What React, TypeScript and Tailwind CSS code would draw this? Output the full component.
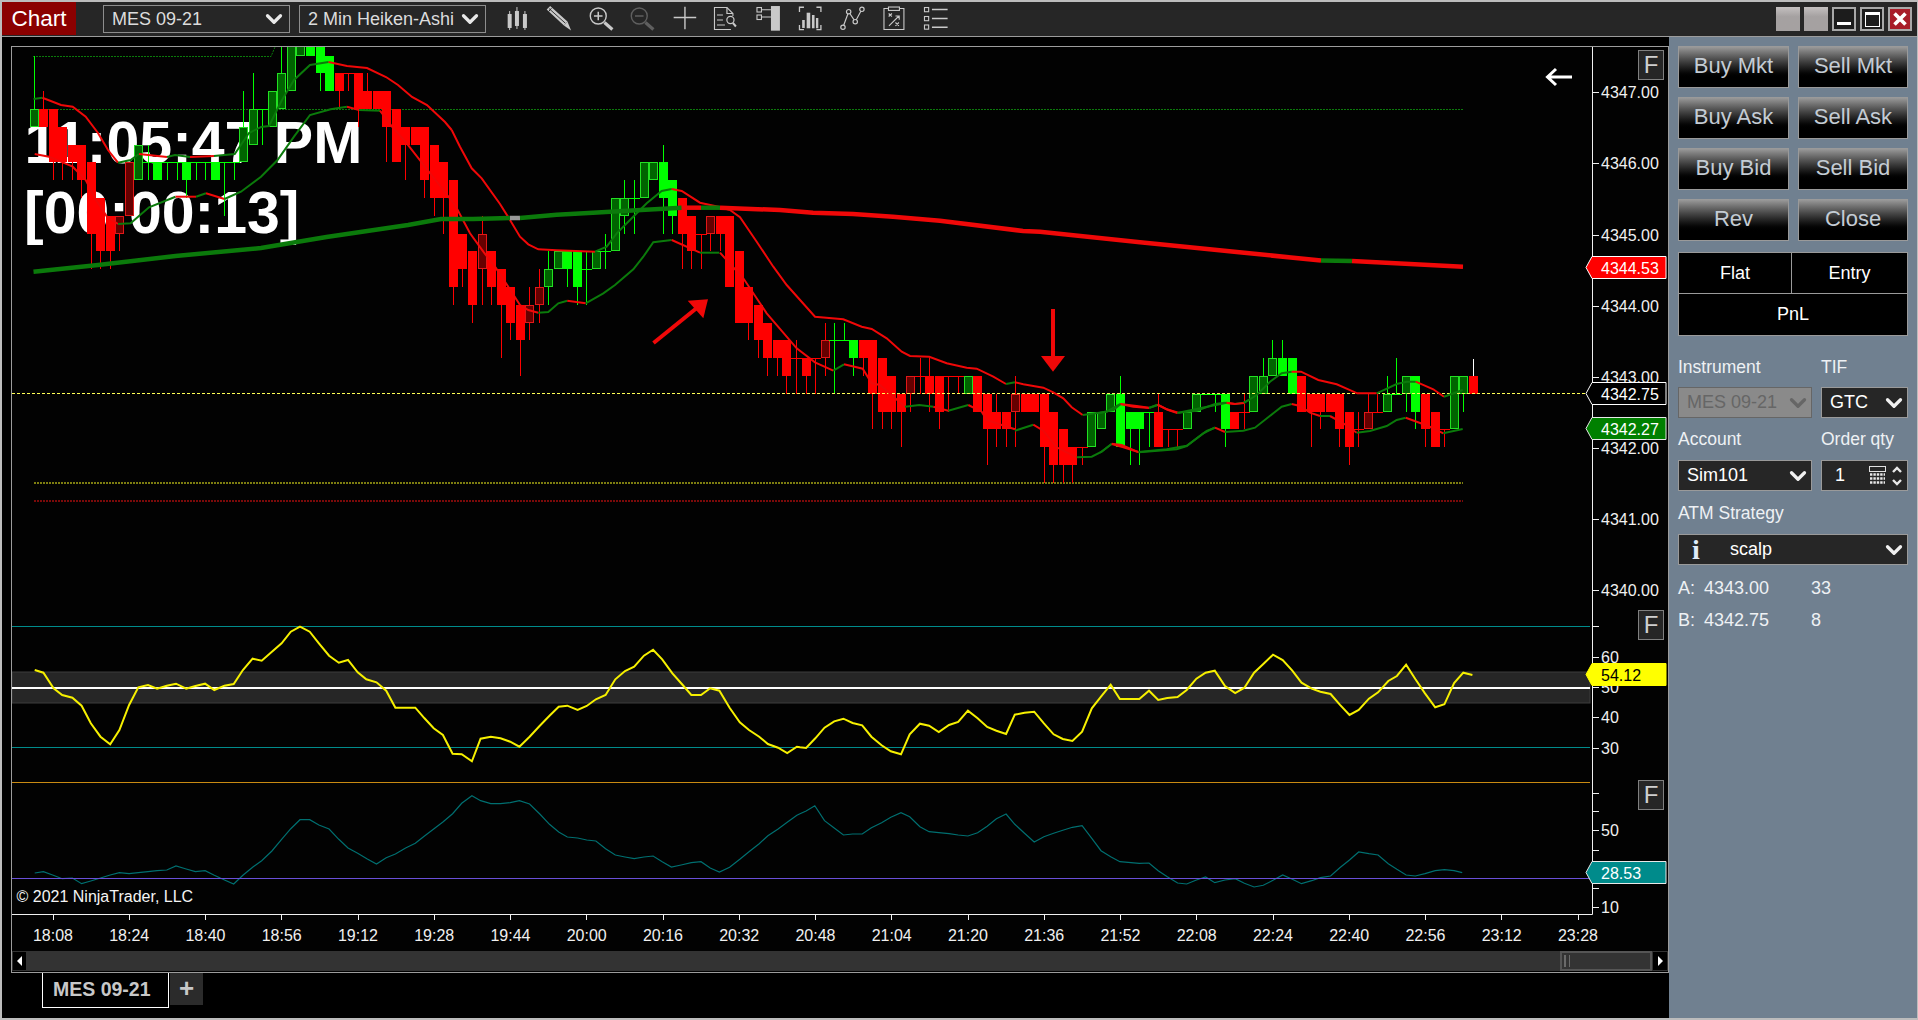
import { ChevronDown } from "lucide-react";

type Candle = [string, number, number, number?, number?];

// [type, body top, body bottom, wick high, wick low] in quarter point levels, 0 = 4346.00
const candles: Candle[] = [
  ["g", -3, -2, -6], ["R", -3, -2, -4], ["R", -3, 0, -3, 1], ["R", -2, 0, -2, 1], ["R", -1, 0, -1, 1], ["R", -1, 1, -1, 2],
  ["R", 0, 4, 0, 6], ["R", 2, 5, 2, 6], ["R", 3, 5, 3, 6], ["r", 3, 4, 3, 5], ["r", 0, 3], ["g", -1, 1],
  ["e", 0, 0, -1, 1], ["G", 0, 1], ["e", 0, 0, 0, 1], ["e", 0, 0, 0, 1], ["G", 0, 1, 0, 2], ["e", 0, 0, 0, 1],
  ["e", 0, 0, 0, 1], ["G", 0, 1], ["e", 0, 0, 0, 3], ["e", 0, 0, 0, 1], ["g", -2, 0, -4], ["g", -3, -1, -5],
  ["e", -3, -3, -3, -1], ["g", -4, -2], ["g", -5, -3, -7], ["g", -7, -4], ["g", -7, -6], ["G", -7, -6], ["G", -7, -5, -7, -4],
  ["G", -6, -4], ["R", -5, -4, -5, -3], ["d", -5, -5, -5, -4], ["R", -5, -3, -5, -2], ["R", -4, -3, -5], ["R", -4, -3],
  ["R", -4, -2, -4, 0], ["R", -3, 0], ["R", -2, -1, -2, 1], ["R", -2, -1], ["R", -2, 1, -2, 2], ["R", -1, 2, -1, 3],
  ["R", 0, 2, 0, 4], ["R", 1, 7, 1, 8], ["R", 4, 6, 4, 7], ["R", 5, 8, 5, 9], ["r", 4, 6, 3, 8], ["R", 5, 7, 5, 8],
  ["R", 6, 8, 6, 11], ["R", 7, 9, 7, 10], ["R", 8, 10, 8, 12], ["r", 8, 9, 7, 10], ["r", 7, 8, 6, 9], ["g", 6, 7, 5, 8],
  ["g", 5, 6], ["G", 5, 6, 5, 7], ["G", 5, 7, 5, 8], ["e", 6, 6, 5, 8], ["g", 5, 6], ["e", 5, 5, 4, 6], ["g", 2, 5],
  ["g", 2, 3, 1, 4], ["e", 2, 2, 1, 4], ["g", 0, 2], ["g", 0, 1], ["G", 0, 2, -1, 4], ["G", 1, 3, 1, 4], ["R", 2, 4, 2, 6],
  ["R", 3, 5, 3, 6], ["d", 4, 4, 4, 6], ["r", 3, 4, 3, 5], ["R", 3, 4, 3, 5], ["R", 3, 7], ["R", 5, 9], ["R", 7, 9, 7, 10],
  ["R", 8, 10, 8, 11], ["R", 9, 11, 9, 12], ["R", 10, 11, 10, 12], ["R", 10, 12, 10, 13], ["d", 11, 11, 10, 13],
  ["R", 11, 12, 11, 13], ["d", 11, 11, 11, 13], ["r", 10, 11, 9, 12], ["e", 10, 10, 9, 13], ["e", 10, 10, 9, 10],
  ["G", 10, 11, 10, 12], ["R", 10, 11, 10, 12], ["R", 10, 13, 10, 15], ["R", 11, 14, 11, 15], ["R", 12, 14, 12, 15],
  ["R", 13, 14, 13, 16], ["r", 12, 13, 12, 14], ["d", 12, 12, 11, 13], ["R", 12, 13, 11, 14], ["R", 12, 14, 12, 15],
  ["d", 12, 12, 12, 14], ["d", 12, 12, 12, 13], ["g", 12, 13], ["R", 12, 14], ["R", 13, 15, 13, 17], ["R", 14, 15, 13, 16],
  ["R", 14, 15, 14, 16], ["r", 13, 14, 12, 16], ["R", 13, 14], ["R", 13, 14], ["R", 13, 16, 13, 18], ["R", 14, 17, 14, 18],
  ["R", 15, 17, 15, 18], ["R", 16, 17, 16, 18], ["d", 16, 16, 16, 17], ["g", 14, 16], ["g", 14, 15], ["g", 13, 14],
  ["G", 13, 16, 12, 16], ["G", 14, 15, 14, 17], ["G", 14, 15, 14, 17], ["e", 14, 14, 14, 16], ["R", 14, 16, 13, 16],
  ["d", 15, 15, 15, 16], ["d", 15, 15, 15, 16], ["g", 14, 15], ["g", 13, 14], ["e", 13, 13, 13, 13], ["e", 13, 13, 13, 14],
  ["G", 13, 15, 13, 16], ["R", 14, 15], ["d", 14, 14, 13, 15], ["g", 12, 14], ["g", 12, 13, 11, 13], ["g", 11, 12, 10, 12],
  ["G", 11, 12, 10, 12], ["G", 11, 13], ["R", 12, 14], ["R", 13, 14, 13, 16], ["R", 13, 14, 13, 15], ["R", 13, 14],
  ["R", 13, 15, 13, 16], ["R", 14, 16, 14, 17], ["d", 15, 15, 14, 16], ["r", 14, 15, 13, 15], ["d", 14, 14, 13, 14],
  ["g", 13, 14, 12, 14], ["e", 13, 13, 11, 13], ["g", 12, 13, 12, 14], ["G", 12, 14, 12, 15], ["R", 13, 15, 13, 16],
  ["R", 14, 16], ["d", 15, 15, 15, 16], ["g", 12, 15], ["g", 12, 13, 12, 14], ["R", 12, 13],
];

const levelY = (k: number) => Math.round(162.4 + 17.8 * k);
const candleX = (i: number) => Math.round(33.6 + 9.53 * i);

// picks points off a 3x crop: offset + value / 3
const crop = (ox: number, oy: number, p: number[]) => p.map((v, i) => (i % 2 === 0 ? ox + v / 3 : oy + v / 3));
const toPts = (p: number[]) => p.map((v) => v.toFixed(1)).join(" ");
const R = "#f00808";
const D = "#0b7a0b";

const maLines: [string, number[]][] = [
  [D, [33.5, 99, 42.4, 97.7]],
  [R, [42.4, 97.7, 61, 105, 72.7, 106.7, 85.7, 116.7, 98, 133, 108, 150, 118, 162.7]],
  [D, [118, 162.7, 130.6, 160, 139, 154]],
  [R, [139, 154, 167, 157]],
  [D, [167, 157, 175, 155, 190, 157]],
  [R, [190, 157, 214, 156]],
  [D, [214, 156, 234.7, 154, 249, 133, 261, 127, 269, 126, 282, 100, 294, 80, 310, 65, 328.6, 62]],
  [R, [328.6, 62, 347, 66, 367, 68, 386, 77, 398, 85, 412, 97, 427, 105, 445, 122, 451.7, 130]],
  [R, crop(440, 130, [35, 0, 60, 50, 95, 115, 125, 145, 180, 222, 210, 270, 240, 320, 265, 343, 295, 358, 350, 361, 465, 365])],
  [D, crop(440, 130, [465, 365, 500, 350, 530, 310, 570, 270, 620, 220, 665, 183, 695, 177])],
  [R, crop(440, 130, [695, 177, 725, 183, 780, 218, 835, 230, 870, 240])],
  [R, crop(640, 130, [270, 240, 300, 262, 350, 335, 400, 410, 440, 465, 525, 560, 610, 568, 665, 590, 695, 597, 740, 625, 785, 665, 810, 678, 868, 680, 920, 700, 980, 713, 1010, 716, 1060, 740, 1098, 762])],
  [D, crop(640, 130, [1098, 762, 1125, 757])],
  [R, crop(640, 130, [1125, 757, 1150, 763, 1210, 773, 1240, 787, 1270, 805, 1295, 832, 1328, 855])],
  [D, crop(640, 130, [1328, 855, 1400, 845, 1440, 822])],
  [R, crop(850, 340, [810, 192, 860, 198, 897, 203])],
  [D, crop(850, 340, [897, 203, 925, 195])],
  [R, crop(850, 340, [925, 195, 950, 208, 985, 218])],
  [D, crop(850, 340, [985, 218, 1040, 212, 1095, 192, 1125, 188])],
  [R, crop(850, 340, [1125, 188, 1155, 192])],
  [D, crop(850, 340, [1155, 192, 1180, 188, 1200, 178])],
  [D, crop(1100, 330, [0, 248, 40, 240, 62, 222])],
  [R, crop(1100, 330, [62, 222, 100, 230, 147, 234])],
  [D, crop(1100, 330, [147, 234, 172, 224])],
  [R, crop(1100, 330, [172, 224, 205, 240, 232, 249])],
  [D, crop(1100, 330, [232, 249, 300, 235, 380, 218])],
  [R, crop(1100, 330, [380, 218, 405, 222, 432, 219])],
  [D, crop(1100, 330, [432, 219, 470, 195, 510, 155, 545, 130, 575, 125])],
  [R, crop(1100, 330, [575, 125, 603, 125, 655, 150, 710, 163, 772, 190, 830, 190])],
  [D, crop(1100, 330, [830, 190, 890, 162, 920, 155, 947, 155])],
  [R, crop(1100, 330, [947, 155, 1000, 178, 1032, 200])],
  [D, crop(1100, 330, [1032, 200, 1088, 180])],
  // lower band
  [R, [34.7, 154, 49, 156.7, 72.7, 166.7, 85.7, 180, 96, 200, 107, 216.7, 118, 224]],
  [D, [118, 224, 130.6, 223.3, 149, 207.3, 175.5, 196.7]],
  [R, [175.5, 196.7, 196, 196.7]],
  [D, [196, 196.7, 206, 193.3]],
  [R, [206, 193.3, 224.5, 199]],
  [D, [224.5, 199, 241, 191.7, 261, 176.7, 277.5, 160, 294, 136.7, 310, 115, 330.6, 109.3, 347, 106.7]],
  [R, [347, 106.7, 359, 110]],
  [D, [359, 110, 380, 110.7]],
  [R, [380, 110.7, 392, 126.7, 404, 140, 455, 205]],
  [R, crop(440, 130, [45, 225, 90, 310, 130, 365, 165, 410, 195, 455, 240, 525, 265, 540, 295, 548])],
  [D, crop(440, 130, [295, 548, 325, 546, 355, 520, 382, 512])],
  [R, crop(440, 130, [382, 512, 437, 520])],
  [D, crop(440, 130, [437, 520, 490, 490, 525, 465, 580, 418, 610, 380, 640, 337, 695, 330])],
  [R, crop(440, 130, [695, 330, 780, 368])],
  [D, crop(440, 130, [780, 368, 838, 368])],
  [R, crop(640, 130, [240, 368, 310, 445, 360, 520, 380, 550, 470, 655, 525, 697, 580, 722])],
  [D, crop(640, 130, [580, 722, 612, 703])],
  [R, crop(640, 130, [612, 703, 668, 716, 695, 760, 720, 765, 795, 830])],
  [D, crop(640, 130, [795, 830, 838, 825, 880, 830])],
  [R, crop(640, 130, [880, 830, 925, 842])],
  [D, crop(640, 130, [925, 842, 985, 825])],
  [R, crop(640, 130, [985, 825, 1025, 845, 1040, 870, 1085, 885, 1125, 898])],
  [D, crop(850, 340, [495, 272, 550, 254])],
  [R, crop(850, 340, [550, 254, 580, 272, 620, 322, 680, 352])],
  [D, crop(850, 340, [680, 352, 725, 350, 755, 335, 785, 311])],
  [R, crop(850, 340, [785, 311, 815, 315, 867, 337])],
  [D, crop(850, 340, [867, 337, 980, 328, 1010, 318, 1060, 280, 1095, 262])],
  [D, crop(1100, 330, [0, 368, 35, 342])],
  [R, crop(1100, 330, [35, 342, 70, 352, 115, 366])],
  [D, crop(1100, 330, [115, 366, 200, 358, 260, 347, 320, 303, 345, 293])],
  [R, crop(1100, 330, [345, 293, 375, 306])],
  [D, crop(1100, 330, [375, 306, 430, 302, 465, 293, 520, 250, 545, 230, 575, 222])],
  [R, crop(1100, 330, [575, 222, 600, 228, 630, 248, 660, 258])],
  [D, crop(1100, 330, [660, 258, 690, 258])],
  [R, crop(1100, 330, [690, 258, 730, 280, 770, 308])],
  [D, crop(1100, 330, [770, 308, 810, 303, 860, 288, 890, 270, 917, 263])],
  [R, crop(1100, 330, [917, 263, 985, 288, 1030, 310])],
  [D, crop(1100, 330, [1030, 310, 1088, 297])],
];

const slowMa: [string, number[]][] = [
  [D, [33.5, 271.7, 98, 265, 175.5, 256, 261, 248, 326.5, 237, 408, 225, 441, 219, 473, 219, 510, 218]],
  ["#999999", [510, 218, 520, 218]],
  [D, [520, 218, 556.7, 214.7, 593, 212.7, 623, 211, 681.7, 207.7]],
  [R, [681.7, 207.7, 701, 207.7]],
  [D, [701, 207.7, 720, 207.7]],
  [R, [720, 207.7, 780, 210, 813, 212.7, 853, 214, 893, 216.7, 940, 220.7, 1023, 231, 1040, 231.7, 1140, 242.3, 1321, 260.5]],
  [D, [1321, 260.5, 1352, 261]],
  [R, [1352, 261, 1463, 266.7]],
];

// oscillators, read off 800px wide crops squeezed to 1568
const squeezed = (ox: number, p: number[]) => p.map((v, i) => (i % 2 === 0 ? ox + v / 1.96 : 610 + v / 3));

const yellowOsc = [
  ...squeezed(0, [68,180,85,188,105,235,122,255,142,263,160,287,178,340,197,380,216,403,234,360,253,285,271,232,290,225,308,236,327,227,345,221,365,236,383,228,402,221,420,240,440,227,458,222,476,180,495,146,513,152,533,125,552,100,570,65,588,50,607,65,625,100,645,137,664,158,682,150,701,187,718,208,738,217,757,242,775,293,814,293,832,325,850,355,868,375,887,431,905,433,925,454,942,386,962,380,981,385,1000,395,1018,410,1038,380,1058,347,1077,317,1095,290,1112,287,1132,300,1150,288,1168,268,1187,255,1206,208,1225,183,1243,170,1262,137,1280,119,1298,148,1318,190,1338,225,1355,255,1374,255,1392,235,1410,242,1430,293,1450,337,1468,360,1488,380,1505,402,1525,413,1543,429,1562,410]),
  ...squeezed(800, [0,412,12,414,30,385,48,353,67,334,85,326,103,339,122,346,140,380,160,406,178,424,198,433,215,373,235,341,253,347,272,366,292,345,310,336,329,302,348,325,367,351,385,362,404,372,421,314,440,308,459,305,478,340,497,373,515,387,534,393,553,365,572,295,590,260,609,224,627,267,665,267,684,242,702,270,720,264,740,261,758,240,777,206,795,188,813,182,833,228,853,249,871,233,890,188,908,162,927,134,946,150,965,182,983,218,1003,236,1020,245,1040,252,1058,284,1077,315,1095,300,1115,266,1133,247,1153,213,1170,198,1188,164,1206,207,1225,250,1245,292,1263,283,1282,219,1300,188,1318,195]),
];

const tealOsc = [
  ...squeezed(0, [68,789,85,785,103,795,122,806,142,804,160,821,178,813,197,804,216,795,234,788,253,791,271,788,290,785,308,782,327,780,345,768,365,777,383,785,402,782,420,796,440,810,458,822,476,796,495,772,513,752,533,723,552,688,570,656,588,629,607,629,625,645,645,657,664,688,682,714,701,730,720,747,738,762,757,743,775,732,795,714,814,700,832,678,850,657,868,636,887,611,905,580,925,557,942,572,962,581,981,581,1000,578,1018,572,1038,582,1058,612,1077,643,1095,666,1112,681,1132,684,1150,690,1168,693,1187,716,1206,735,1225,741,1243,746,1262,741,1280,738,1298,755,1316,771,1335,765,1355,758,1374,755,1392,774,1410,786,1430,772,1450,748,1468,725,1488,701,1505,677,1525,657,1543,637,1562,616]),
  ...squeezed(800, [0,611,12,603,29,587,48,632,67,654,85,675,103,672,122,672,140,653,160,638,178,622,198,608,215,620,235,650,253,665,272,668,292,671,310,675,329,678,348,668,367,649,385,626,404,612,421,643,440,670,459,696,478,680,497,670,515,661,534,652,553,647,572,685,590,722,609,740,627,755,665,760,684,759,702,782,720,800,740,819,758,822,777,810,795,801,813,818,833,810,853,806,871,820,890,831,908,826,927,811,946,795,965,808,983,821,1003,812,1020,803,1040,798,1058,773,1077,750,1095,726,1115,731,1133,735,1153,761,1170,778,1188,795,1206,798,1225,791,1245,782,1263,779,1282,782,1298,788]),
];

const priceLabels: [string, number][] = [
  ["4347.00", 92], ["4346.00", 163], ["4345.00", 235], ["4344.00", 306], ["4343.00", 377], ["4342.00", 448], ["4341.00", 519], ["4340.00", 590],
  ["60", 657], ["50", 687], ["40", 717], ["30", 748], ["50", 830], ["10", 907],
];
const plainTicks = [626, 793, 811, 850, 869, 888];

const timeLabels = ["18:08","18:24","18:40","18:56","19:12","19:28","19:44","20:00","20:16","20:32","20:48","21:04","21:20","21:36","21:52","22:08","22:24","22:40","22:56","23:12","23:28"];

const tags: [string, number, number, string, string, string][] = [
  ["4344.53", 256, 279, "#ff0000", "#ffffff", "#ffffff"],
  ["4342.75", 382, 405, "#000000", "#ffffff", "#ffffff"],
  ["4342.27", 417, 440, "#008000", "#ffffff", "#e8e8e8"],
  ["54.12", 663, 686, "#ffff00", "#000000", "#ffff00"],
  ["28.53", 861, 884, "#008b8b", "#ffffff", "#e8e8e8"],
];

function CandleMark({ c, i }: { c: Candle; i: number }) {
  const [t, top, bot, hi, lo] = c;
  const x = candleX(i);
  const isRed = t === "R" || t === "r" || t === "d";
  const color = isRed ? "#ff0000" : "#00ff00";
  const y1 = levelY(hi ?? top);
  const y2 = levelY(lo ?? bot);
  const by = levelY(top);
  const bh = levelY(bot) - by;
  return (
    <g>
      <rect x={x} y={y1} width={1} height={Math.max(y2 - y1, 1)} fill={color} />
      {(t === "R" || t === "G") && <rect x={x - 4} y={by} width={9} height={bh} fill={color} />}
      {(t === "g" || t === "r") && (
        <rect x={x - 3.5} y={by + 0.5} width={8} height={bh - 1} fill={t === "g" ? "#006400" : "#660000"} stroke={t === "g" ? "#22e022" : "#e01818"} />
      )}
      {(t === "d" || t === "e") && <rect x={x - 5} y={by} width={11} height={1} fill={color} />}
    </g>
  );
}

function ChartArea() {
  return (
    <svg viewBox="12 47 1656 904" className="block w-[1656px] h-[904px] bg-[#020202]">
      <text x="24.5" y="163" fontSize="59" fontWeight="700" fill="#fff">11:05:47 PM</text>
      <text x="24" y="233" fontSize="59" fontWeight="700" fill="#fff">[00:00:13]</text>

      {/* dotted levels */}
      <path d="M33 56.5H271L275 47" fill="none" stroke="#0b7a0b" strokeDasharray="2 1" />
      <path d="M33 109.5H1463" stroke="#0b7a0b" strokeDasharray="2 1" />
      <path d="M34 483H1463" stroke="#7d7d10" strokeWidth="2" strokeDasharray="2 1" />
      <path d="M34 501H1463" stroke="#7a0a0a" strokeWidth="2" strokeDasharray="2 1" />

      <g shapeRendering="crispEdges">
        {candles.map((c, i) => (
          <CandleMark key={i} c={c} i={i} />
        ))}
        <rect x={candleX(151)} y={359} width={1} height={17} fill="#fff" />
      </g>

      <path d="M12 393.5H1586" stroke="#ffff55" strokeDasharray="3 2" />

      {maLines.map(([color, p], i) => (
        <polyline key={i} points={toPts(p)} fill="none" stroke={color} strokeWidth="2" />
      ))}
      {slowMa.map(([color, p], i) => (
        <polyline key={i} points={toPts(p)} fill="none" stroke={color} strokeWidth="4.5" />
      ))}

      {/* drawn arrows */}
      <path d="M653.5 343L698 307" stroke="#f00808" strokeWidth="4" />
      <polygon points="687.7,300.7 708,299.3 703.3,318.3" fill="#f00808" />
      <path d="M1053 309V358" stroke="#f00808" strokeWidth="4" />
      <polygon points="1041,356 1065,356 1053,371.7" fill="#f00808" />
      <path d="M1549 77H1572M1556 69L1547.5 77L1556 85" fill="none" stroke="#fff" strokeWidth="3" />

      {/* indicator panels */}
      <rect x="12" y="672" width="1578" height="31" fill="#262626" stroke="#3c3c3c" />
      <path d="M12 626.5H1590M12 747.5H1590" stroke="#008b8b" />
      <path d="M12 688H1590" stroke="#fff" strokeWidth="2" />
      <path d="M12 782.5H1590" stroke="#c98a12" />
      <polyline points={toPts(tealOsc)} fill="none" stroke="#006f70" strokeWidth="1.2" />
      <path d="M12 878.5H1590" stroke="#6a4fd8" />
      <polyline points={toPts(yellowOsc)} fill="none" stroke="#f6f000" strokeWidth="2" />

      <text x="16.5" y="902" fontSize="16" fill="#f4f4f4">© 2021 NinjaTrader, LLC</text>

      {/* axes */}
      <path d="M1592.5 47V914.5H12" fill="none" stroke="#f0f0f0" />
      <g shapeRendering="crispEdges">
        {priceLabels.map(([, y], i) => (
          <rect key={i} x="1593" y={y} width="6" height="1" fill="#f0f0f0" />
        ))}
        {plainTicks.map((y) => (
          <rect key={y} x="1593" y={y} width="6" height="1" fill="#f0f0f0" />
        ))}
        {timeLabels.map((_, i) => (
          <rect key={i} x={Math.round(52.7 + 76.25 * i)} y="915" width="1" height="5" fill="#f0f0f0" />
        ))}
      </g>
      {priceLabels.map(([label, y], i) => (
        <text key={i} x="1601" y={y + 6} fontSize="16" fill="#f0f0f0">{label}</text>
      ))}
      {timeLabels.map((label, i) => (
        <text key={label} x={53 + 76.25 * i} y="941" fontSize="16" fill="#f0f0f0" textAnchor="middle">{label}</text>
      ))}

      {tags.map(([label, top, bot, fill, text, stroke]) => (
        <g key={label}>
          <polygon
            points={`1586,${(top + bot) / 2} 1592,${top + 0.5} 1666,${top + 0.5} 1666,${bot - 0.5} 1592,${bot - 0.5}`}
            fill={fill}
            stroke={stroke}
          />
          <text x="1601" y={(top + bot) / 2 + 6} fontSize="16" fill={text}>{label}</text>
        </g>
      ))}
    </svg>
  );
}

function ToolIcon({ children, dim }: { children: React.ReactNode; dim?: boolean }) {
  return (
    <svg viewBox="0 0 42 34" className={`w-[41.9px] h-[34px] shrink-0 ${dim ? "text-[#5f5f5f]" : "text-[#c9c9c9]"}`} fill="none" stroke="currentColor">
      {children}
    </svg>
  );
}

function Toolbar() {
  return (
    <div className="flex items-start">
      <ToolIcon>
        <g fill="currentColor" stroke="none">
          <rect x="11.7" y="12" width="4" height="14" />
          <rect x="13.2" y="9" width="1" height="19" />
          <rect x="19" y="9" width="4" height="15" />
          <rect x="20.5" y="5" width="1" height="22" />
          <rect x="27" y="12" width="4" height="14" />
          <rect x="28.5" y="9" width="1" height="19" />
        </g>
      </ToolIcon>
      <ToolIcon>
        <polygon points="8.7,7.5 12.2,4 29.5,19.5 26,23.5" fill="currentColor" stroke="none" />
        <path d="M11 6.5L27.5 21.3" stroke="#262626" strokeWidth="0.9" />
        <path d="M13.5 6.2L10.8 9.4" stroke="#262626" strokeWidth="1" />
        <polygon points="26,23.5 29.5,19.5 33.2,28.5" fill="currentColor" stroke="none" />
      </ToolIcon>
      <ToolIcon>
        <circle cx="18.3" cy="14" r="8" strokeWidth="1.4" />
        <path d="M14 14H22.6M18.3 9.7V18.3" strokeWidth="1.5" />
        <path d="M24.5 20.5L32.5 27.5" strokeWidth="3.2" />
      </ToolIcon>
      <ToolIcon dim>
        <circle cx="17.3" cy="14" r="8" strokeWidth="1.4" />
        <path d="M13 14H21.6" strokeWidth="1.5" />
        <path d="M23.5 20.5L31.5 27.5" strokeWidth="3.2" />
      </ToolIcon>
      <ToolIcon>
        <path d="M9.7 15.5H32.3M21 4.7V27.3" strokeWidth="1.4" />
      </ToolIcon>
      <ToolIcon>
        <path d="M26 27.5H9.5V5.5H22L28 11.5V14" strokeWidth="1.1" />
        <path d="M22 5.5V11.5H28M12 13H18M12 18H18M12 23H20" strokeWidth="1.2" />
        <circle cx="25.5" cy="18" r="3.6" strokeWidth="1.2" />
        <path d="M28 21L31 24.5" strokeWidth="2" />
      </ToolIcon>
      <ToolIcon>
        <rect x="10" y="5.5" width="4.5" height="4.5" strokeWidth="1.1" />
        <rect x="10" y="13" width="4.5" height="4.5" strokeWidth="1.1" />
        <path d="M14.5 7.7H24M14.5 15H24" strokeWidth="1.1" />
        <rect x="24" y="4" width="9" height="24.7" fill="currentColor" stroke="none" />
      </ToolIcon>
      <ToolIcon>
        <path d="M15 5.2H10.5V10M27.5 5.2H32V10M15 27.7H10.5V23M27.5 27.7H32V23" strokeWidth="1.3" />
        <g fill="currentColor" stroke="none">
          <rect x="13.2" y="18" width="2.6" height="8" />
          <rect x="17.7" y="10.7" width="3.6" height="15.6" />
          <rect x="23" y="13" width="2.6" height="13.3" />
          <rect x="27" y="16" width="2.4" height="10.3" />
        </g>
      </ToolIcon>
      <ToolIcon>
        <path d="M12 25.3L17.7 9.7L24.3 19.7L31 7.3" strokeWidth="1.2" />
        <g fill="#262626" strokeWidth="1.2">
          <circle cx="12" cy="25.3" r="2.2" />
          <circle cx="17.7" cy="9.7" r="2.2" />
          <circle cx="24.3" cy="19.7" r="2.2" />
          <circle cx="31" cy="7.3" r="2.2" />
        </g>
      </ToolIcon>
      <ToolIcon>
        <path d="M15 6.5H11V27.5H31V6.5H27" strokeWidth="1.1" />
        <rect x="15.5" y="5" width="11" height="3.4" strokeWidth="1.1" />
        <path d="M15.7 11.5L19 14.5M19 11.5L15.7 14.5M22.5 20.5L26 24M26 20.5L22.5 24M16 24L26 14M22.5 14H26.3V17.8" strokeWidth="1.1" />
      </ToolIcon>
      <ToolIcon>
        <rect x="9.5" y="5.5" width="4.2" height="4.2" strokeWidth="1.1" />
        <rect x="9.5" y="14.5" width="4.2" height="4.2" strokeWidth="1.1" />
        <rect x="9.5" y="23" width="4.2" height="4.2" strokeWidth="1.1" />
        <path d="M17 7.5H32.7M17 16.5H32.7M17 25.3H32.7" strokeWidth="1.4" />
      </ToolIcon>
    </div>
  );
}

function WindowButtons() {
  return (
    <div className="ml-auto mt-[5px] mr-[5px] flex gap-[4px]">
      <div className="w-[24px] h-[24px] bg-linear-to-b from-[#c4c0c0] to-[#a5a1a1] to-40%" />
      <div className="w-[24px] h-[24px] bg-linear-to-b from-[#c4c0c0] to-[#a5a1a1] to-40%" />
      <div className="w-[24px] h-[24px] border-2 border-[#a8a8a8] bg-[#1c1c1c] flex items-end justify-center pb-[4px]">
        <div className="w-[14px] h-[3px] bg-white" />
      </div>
      <div className="w-[24px] h-[24px] border-2 border-[#a8a8a8] bg-[#1c1c1c] flex items-center justify-center">
        <div className="w-[15px] h-[15px] border border-white border-t-[3px]" />
      </div>
      <div className="w-[24px] h-[24px] border-2 border-[#a8a8a8] bg-[#a81c28] flex items-center justify-center">
        <svg viewBox="0 0 16 16" className="w-[16px] h-[16px]">
          <path d="M2.5 2.5L13.5 13.5M13.5 2.5L2.5 13.5" stroke="#fff" strokeWidth="3.6" />
        </svg>
      </div>
    </div>
  );
}

function TitleBar() {
  return (
    <div className="h-[35px] flex items-start bg-[#262626] border-b border-[#9c9c9c] shrink-0">
      <div className="w-[74px] h-[33px] bg-[#8b0000] text-white text-[22.5px] leading-[33px] text-center">Chart</div>
      <div className="ml-[27px] mt-[3px] w-[187px] h-[28px] border border-[#8d8d8d] flex items-center justify-between pl-[8px] pr-[2px] text-[18px] text-[#dcdcdc]">
        <span>MES 09-21</span>
        <ChevronDown size={26} strokeWidth={3} color="#e8e8e8" />
      </div>
      <div className="ml-[9px] mt-[3px] w-[187px] h-[28px] border border-[#8d8d8d] flex items-center justify-between pl-[8px] pr-[2px] text-[18px] text-[#dcdcdc] whitespace-nowrap">
        <span>2 Min Heiken-Ashi</span>
        <ChevronDown size={26} strokeWidth={3} color="#e8e8e8" />
      </div>
      <div className="ml-[10px]">
        <Toolbar />
      </div>
      <WindowButtons />
    </div>
  );
}

function ScrollBar() {
  return (
    <div className="h-[20px] bg-[#333333] flex items-center shrink-0">
      <div className="ml-[1px] w-[13px] h-[18px] bg-black flex items-center justify-center">
        <svg viewBox="0 0 6 10" className="w-[6px] h-[10px]"><polygon points="5,0 5,10 0,5" fill="#fff" /></svg>
      </div>
      <div className="ml-auto w-[92px] h-[20px] border-2 border-[#555555] flex items-center gap-[3px] pl-[2px]">
        <div className="w-[2px] h-[12px] bg-[#6a6a6a]" />
        <div className="w-[1px] h-[12px] bg-[#6a6a6a]" />
      </div>
      <div className="ml-[1px] mr-[1px] w-[14px] h-[18px] bg-black flex items-center justify-center">
        <svg viewBox="0 0 6 10" className="w-[6px] h-[10px]"><polygon points="1,0 1,10 6,5" fill="#fff" /></svg>
      </div>
    </div>
  );
}

function FButton({ className }: { className: string }) {
  return (
    <div className={`absolute left-[1626px] w-[26px] h-[30px] bg-[#262626] border border-[#808080] text-[#cfcfcf] text-[24px] leading-[28px] text-center ${className}`}>
      F
    </div>
  );
}

function OrderButton({ label }: { label: string }) {
  return (
    <div className="h-[42px] border border-[#9a9a9a] bg-linear-to-b from-[#999999] to-black to-80% text-[#c4ccd4] text-[22px] leading-[38px] text-center">
      {label}
    </div>
  );
}

function Select({ label, disabled, className = "" }: { label: string; disabled?: boolean; className?: string }) {
  return (
    <div
      className={`h-[31px] border flex items-center justify-between pl-[8px] text-[18px] ${
        disabled ? "bg-[#8a8a8a] border-[#666666] text-[#666666]" : "bg-[#262626] border-[#9a9a9a] text-white"
      } ${className}`}
    >
      <span>{label}</span>
      <ChevronDown size={26} strokeWidth={3} color={disabled ? "#666666" : "#f0f0f0"} />
    </div>
  );
}

function CalcIcon() {
  return (
    <svg viewBox="0 0 17 20" className="w-[17px] h-[20px]">
      <rect x="0.5" y="0.5" width="16" height="5" fill="none" stroke="#e0e0e0" />
      <path d="M1 8.5H16M1 12.5H16M1 16.5H16" stroke="#e8e8e8" strokeWidth="2.4" strokeDasharray="2.4 1" />
    </svg>
  );
}

function SidePanel() {
  return (
    <div className="w-[248px] bg-[#708090] pl-[9px] pt-[9px] shrink-0">
      <div className="grid grid-cols-[111px_110px] gap-[9px]">
        {["Buy Mkt", "Sell Mkt", "Buy Ask", "Sell Ask", "Buy Bid", "Sell Bid", "Rev", "Close"].map((l) => (
          <OrderButton key={l} label={l} />
        ))}
      </div>
      <div className="mt-[11px] w-[230px] h-[84px] border border-[#9a9a9a] bg-black text-white text-[18px]">
        <div className="h-[41px] flex border-b border-[#9a9a9a]">
          <div className="w-[113px] border-r border-[#9a9a9a] flex items-center justify-center">Flat</div>
          <div className="flex-1 flex items-center justify-center">Entry</div>
        </div>
        <div className="h-[41px] flex items-center justify-center">PnL</div>
      </div>

      <div className="mt-[20px] grid grid-cols-[134px_87px] gap-x-[9px] text-[17.5px] text-[#eef1f4]">
        <div className="h-[22px] leading-[22px]">Instrument</div>
        <div className="h-[22px] leading-[22px]">TIF</div>
        <Select label="MES 09-21" disabled className="mt-[9px]" />
        <Select label="GTC" className="mt-[9px]" />
        <div className="h-[22px] leading-[22px] mt-[10px]">Account</div>
        <div className="h-[22px] leading-[22px] mt-[10px]">Order qty</div>
        <Select label="Sim101" className="mt-[10px]" />
        <div className="mt-[10px] h-[31px] border border-[#9a9a9a] bg-[#262626] flex items-center pl-[13px] pr-[5px] text-white text-[18px]">
          <span>1</span>
          <span className="ml-auto"><CalcIcon /></span>
          <svg viewBox="0 0 10 20" className="ml-[6px] w-[10px] h-[20px]">
            <path d="M1 6L5 2L9 6M1 14L5 18L9 14" fill="none" stroke="#e8e8e8" strokeWidth="2.4" />
          </svg>
        </div>
      </div>

      <div className="mt-[11px] h-[22px] leading-[22px] text-[17.5px] text-[#eef1f4]">ATM Strategy</div>
      <div className="mt-[10px] w-[230px] h-[31px] border border-[#9a9a9a] bg-[#262626] flex items-center text-white text-[18px]">
        <span className="ml-[13px] w-[38px] font-['Liberation_Serif',serif] font-bold text-[28px] leading-none text-[#dfeaf8]">i</span>
        <span>scalp</span>
        <ChevronDown className="ml-auto" size={26} strokeWidth={3} color="#f0f0f0" />
      </div>

      <div className="mt-[12px] h-[22px] flex items-center text-[18px] text-[#eef1f4]">
        <span className="w-[26px]">A:</span>
        <span className="w-[107px]">4343.00</span>
        <span>33</span>
      </div>
      <div className="mt-[10px] h-[22px] flex items-center text-[18px] text-[#eef1f4]">
        <span className="w-[26px]">B:</span>
        <span className="w-[107px]">4342.75</span>
        <span>8</span>
      </div>
    </div>
  );
}

export default function App() {
  return (
    <div className="w-[1918px] h-[1020px] flex flex-col border-t-2 border-l-2 border-b-2 border-r border-[#bcbcbc] bg-black overflow-hidden font-['Liberation_Sans',Arial,sans-serif]">
      <TitleBar />
      <div className="flex h-[981px]">
        <div className="w-[1667px] pl-[9px] pt-[9px] bg-black shrink-0">
          <div className="relative w-[1658px] h-[927px] border border-[#9c9c9c] flex flex-col">
            <ChartArea />
            <ScrollBar />
            <FButton className="top-[3px]" />
            <FButton className="top-[563px]" />
            <FButton className="top-[733px]" />
          </div>
          <div className="flex items-start">
            <div className="ml-[31px] w-[127px] h-[35px] border border-t-0 border-white pl-[10px] text-[#c8c8c8] font-bold text-[19.5px] leading-[32px] whitespace-nowrap">
              MES 09-21
            </div>
            <div className="ml-[1px] w-[33px] h-[32px] bg-[#2b2b2b] text-[#c8c8c8] font-bold text-[26px] leading-[30px] text-center">+</div>
          </div>
        </div>
        <SidePanel />
      </div>
    </div>
  );
}
